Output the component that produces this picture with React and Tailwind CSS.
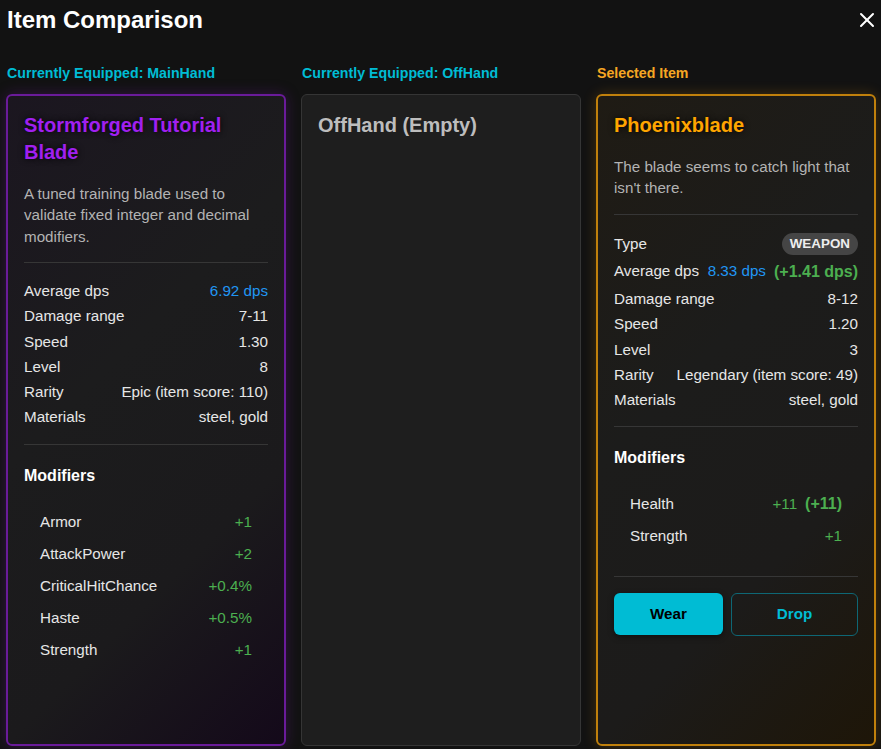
import React from "react";
import { X } from "lucide-react";

const mainStats = [
  ["Average dps", <span className="text-[#2196f3]">6.92 dps</span>],
  ["Damage range", "7-11"],
  ["Speed", "1.30"],
  ["Level", "8"],
  ["Rarity", "Epic (item score: 110)"],
  ["Materials", "steel, gold"],
];

const mainMods = [
  ["Armor", "+1"],
  ["AttackPower", "+2"],
  ["CriticalHitChance", "+0.4%"],
  ["Haste", "+0.5%"],
  ["Strength", "+1"],
];

const Row = ({ label, children, className = "" }) => (
  <div className={`flex items-center justify-between leading-[21px] whitespace-nowrap ${className}`}>
    <span className="text-[#e6e6e6]">{label}</span>
    <span className="text-[#e6e6e6] text-right">{children}</span>
  </div>
);

const Divider = ({ className = "" }) => <div className={`h-px bg-[#363636] ${className}`} />;

const ModRow = ({ name, children }) => (
  <div className="h-8 flex items-center justify-between px-4 whitespace-nowrap">
    <span className="text-[#e6e6e6]">{name}</span>
    <span className="flex items-center gap-2 text-[#4caf50]">{children}</span>
  </div>
);

const App = () => {
  return (
    <div className="h-screen flex flex-col bg-[#121212] text-white font-['Liberation_Sans',Arial,sans-serif] overflow-hidden">
      <div className="h-[39px] shrink-0 flex items-center justify-between pl-[7px] pr-[2px]">
        <h1 className="text-[24px] leading-[28px] font-bold">Item Comparison</h1>
        <button className="text-white">
          <X size={24} strokeWidth={2} />
        </button>
      </div>

      <div className="flex-1 min-h-0 grid grid-cols-3 gap-[15px] pl-[6px] pr-[5px] pt-[26px] pb-[3px]">
        {/* main hand */}
        <div className="flex flex-col min-h-0">
          <div className="pl-[1px] text-[14.2px] leading-[17px] font-bold text-[#00bcd4] mb-[11.5px]">
            Currently Equipped: MainHand
          </div>
          <div className="flex-1 rounded-[6px] border-2 border-[#6a1b9a] px-4 pt-4 bg-[linear-gradient(135deg,#1b1620_0%,#1c1c1d_40%,#1b1a1c_70%,#14091a_100%)] shadow-[0_0_14px_rgba(106,27,154,0.35)] text-[15.2px]">
            <h2 className="text-[20px] leading-[27px] font-bold text-[#a020f0] [text-shadow:0_0_6px_rgba(0,0,0,0.95)]">
              Stormforged Tutorial Blade
            </h2>
            <p className="mt-[17px] leading-[21.5px] text-[#b3b3b3]">
              A tuned training blade used to validate fixed integer and decimal modifiers.
            </p>
            <Divider className="mt-[15px]" />
            <div className="mt-[17px] flex flex-col gap-[4.3px]">
              {mainStats.map(([l, v]) => (
                <Row key={l} label={l}>{v}</Row>
              ))}
            </div>
            <Divider className="mt-[17px]" />
            <h3 className="mt-[19px] text-[16px] leading-[24px] font-bold">Modifiers</h3>
            <div className="mt-[18px]">
              {mainMods.map(([n, v]) => (
                <ModRow key={n} name={n}>{v}</ModRow>
              ))}
            </div>
          </div>
        </div>

        {/* off hand */}
        <div className="flex flex-col min-h-0">
          <div className="pl-[1px] text-[14.2px] leading-[17px] font-bold text-[#00bcd4] mb-[11.5px]">
            Currently Equipped: OffHand
          </div>
          <div className="flex-1 rounded-[6px] border border-[#353535] bg-[#1e1e1e] px-4 pt-[17px]">
            <h2 className="text-[20px] leading-[27px] font-bold text-[#bdbdbd]">OffHand (Empty)</h2>
          </div>
        </div>

        {/* selected */}
        <div className="flex flex-col min-h-0">
          <div className="pl-[1px] text-[14.2px] leading-[17px] font-bold text-[#f5a623] mb-[11.5px]">
            Selected Item
          </div>
          <div className="flex-1 rounded-[6px] border-2 border-[#c0800c] px-4 pt-4 bg-[linear-gradient(135deg,#1f1b14_0%,#1c1c1b_40%,#1c1b1a_70%,#1e1608_100%)] shadow-[0_0_14px_rgba(255,165,0,0.2)] text-[15.2px]">
            <h2 className="text-[20px] leading-[27px] font-bold text-[#ffa500] [text-shadow:0_0_6px_rgba(0,0,0,0.95)]">
              Phoenixblade
            </h2>
            <p className="mt-[17px] leading-[21.5px] text-[#b3b3b3]">
              The blade seems to catch light that isn't there.
            </p>
            <Divider className="mt-[15px]" />
            <div className="mt-[17px] flex flex-col gap-[4.3px]">
              <Row label="Type" className="h-6">
                <span className="inline-block rounded-full bg-[#454545] px-[8px] py-[3px] text-[13.4px] leading-[16px] font-bold text-[#eeeeee]">
                  WEAPON
                </span>
              </Row>
              <div className="flex items-center justify-between h-6 gap-1 whitespace-nowrap">
                <span className="text-[#e6e6e6]">Average dps</span>
                <span className="flex items-center gap-[8px]">
                  <span className="text-[#2196f3]">8.33 dps</span>
                  <span className="text-[#4caf50] font-bold text-[16px]">(+1.41 dps)</span>
                </span>
              </div>
              <Row label="Damage range">8-12</Row>
              <Row label="Speed">1.20</Row>
              <Row label="Level">3</Row>
              <Row label="Rarity">Legendary (item score: 49)</Row>
              <Row label="Materials">steel, gold</Row>
            </div>
            <Divider className="mt-[16px]" />
            <h3 className="mt-[19px] text-[16px] leading-[24px] font-bold">Modifiers</h3>
            <div className="mt-[18px] pb-2">
              <ModRow name="Health">
                <span>+11</span>
                <span className="font-bold text-[16px]">(+11)</span>
              </ModRow>
              <ModRow name="Strength">+1</ModRow>
            </div>
            <Divider className="mt-4" />
            <div className="mt-4 flex gap-2">
              <button className="w-[109px] h-[42px] rounded-[6px] bg-[#00bcd4] text-black font-bold text-[15.2px] shadow-[0_2px_6px_rgba(0,0,0,0.45)]">
                Wear
              </button>
              <button className="flex-1 h-[43px] rounded-[6px] border border-[#0e6775] text-[#00bcd4] font-bold text-[15.2px]">
                Drop
              </button>
            </div>
          </div>
        </div>
      </div>
    </div>
  );
};

export default App;
